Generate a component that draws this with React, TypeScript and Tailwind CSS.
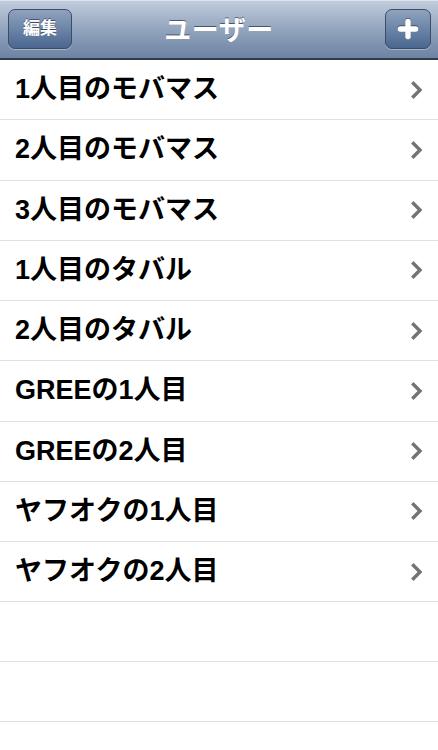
import { Plus } from "lucide-react";

const users = [
  "1人目のモバマス",
  "2人目のモバマス",
  "3人目のモバマス",
  "1人目のタバル",
  "2人目のタバル",
  "GREEの1人目",
  "GREEの2人目",
  "ヤフオクの1人目",
  "ヤフオクの2人目",
];

const font = "font-['Liberation_Sans','Noto_Sans_CJK_JP',sans-serif]";

function Chevron() {
  return (
    <svg width="12" height="18" viewBox="0 0 12 18" className="shrink-0">
      <path
        d="M2.5 2.5 L9 9 L2.5 15.5"
        fill="none"
        stroke="#737373"
        strokeWidth="3.4"
        strokeLinecap="square"
      />
    </svg>
  );
}

export default function App() {
  return (
    <div className={`w-[438px] h-[750px] bg-white overflow-hidden ${font}`}>
      <nav className="relative h-[60px] flex items-center justify-between pl-2 pr-[7px] bg-gradient-to-b from-[#c3cedd] via-[#93a5be] to-[#6c83a3] border-b-2 border-[#2f3a4a] shadow-[inset_0_1px_0_#dde4ee]">
        <button className="h-[40px] w-[64px] rounded-[7px] border border-[#3b4c66] bg-gradient-to-b from-[#90a3bf] to-[#4a6690] shadow-[0_1px_0_rgba(255,255,255,0.35)] text-white text-[17px] font-bold [text-shadow:0_-1px_0_rgba(0,0,0,0.45)]">
          編集
        </button>
        <h1 className="absolute left-1/2 -translate-x-1/2 translate-y-[2px] text-white text-[27px] font-bold leading-none tracking-[0.5px] [text-shadow:0_-1px_0_rgba(0,0,0,0.5)]">
          ユーザー
        </h1>
        <button className="h-[40px] w-[46px] rounded-[7px] border border-[#3b4c66] bg-gradient-to-b from-[#90a3bf] to-[#4a6690] shadow-[0_1px_0_rgba(255,255,255,0.35)] flex items-center justify-center">
          <Plus size={26} strokeWidth={5} color="white" className="drop-shadow-[0_-1px_0_rgba(0,0,0,0.4)]" />
        </button>
      </nav>
      <ul>
        {users.map((name) => (
          <li
            key={name}
            className="h-[60.25px] flex items-center justify-between pl-[15px] pr-[15px] border-b border-[#e0e0e0]"
          >
            <span className="text-[27px] font-bold text-black leading-none">{name}</span>
            <Chevron />
          </li>
        ))}
        <li className="h-[60px] border-b border-[#e0e0e0]" />
        <li className="h-[60px] border-b border-[#e0e0e0]" />
      </ul>
    </div>
  );
}
